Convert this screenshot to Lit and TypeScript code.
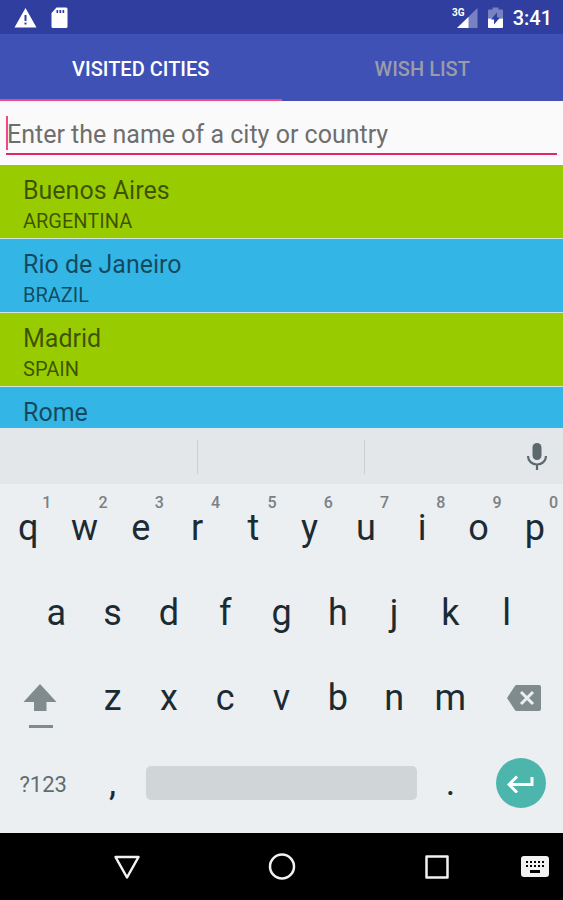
import { LitElement, html, css, svg, nothing } from "lit";
import { customElement, state } from "lit/decorators.js";
import { classMap } from "lit/directives/class-map.js";

interface City {
  name: string;
  country?: string;
}

const VISITED: City[] = [
  { name: "Buenos Aires", country: "ARGENTINA" },
  { name: "Rio de Janeiro", country: "BRAZIL" },
  { name: "Madrid", country: "SPAIN" },
  { name: "Rome" },
];

@customElement("status-bar")
class StatusBar extends LitElement {
  static styles = css`
    :host {
      display: flex;
      align-items: center;
      justify-content: space-between;
      height: 34px;
      padding: 2px 11px 0 14px;
      box-sizing: border-box;
      background: #303f9f;
      color: #fff;
    }
    .group {
      display: flex;
      align-items: center;
      gap: 12px;
    }
    .right {
      gap: 10px;
    }
    .time {
      font-size: 20px;
      line-height: 24px;
      font-weight: 500;
    }
    svg {
      display: block;
    }
    .net {
      font: 700 10px Roboto, sans-serif;
    }
  `;
  render() {
    return html`
      <div class="group">
        <svg width="23" height="22" viewBox="0 0 23 22" fill="#fff" aria-label="Warning">
          <path fill-rule="evenodd" d="M11.5 1 22.5 20.500H.5zM10.500 8v6h2v-6zm0 7.500v2h2v-2z" />
        </svg>
        <svg width="20" height="22" viewBox="0 0 20 22" fill="#fff" aria-label="SD card">
          <path fill-rule="evenodd" d="M7.500 .5H17A1.500 1.500 0 0 1 18.500 2v17.500A1.500 1.500 0 0 1 17 21H4a1.500 1.500 0 0 1-1.500-1.500V6zM7.500 3v3h1.700V3zm3 0v3h1.700V3zm3 0v3h1.700V3z" />
        </svg>
      </div>
      <div class="group right">
        <svg width="26" height="22" viewBox="0 0 26 22" fill="#fff" aria-label="3G signal">
          <path d="M25.500 1v20H5z" opacity="0.35" />
          <path d="M16.500 10V21H5z" />
          <text class="net" x="0" y="9">3G</text>
        </svg>
        <svg width="15" height="22" viewBox="0 0 15 22" fill="#fff" aria-label="Battery charging">
          <path d="M4.500 .5h6v2H14a1 1 0 0 1 1 1v8H0v-8a1 1 0 0 1 1-1h3.500z" opacity="0.35" />
          <path d="M0 11.500h15V20a1 1 0 0 1-1 1H1a1 1 0 0 1-1-1z" />
          <path d="M9 5.500v5h3l-6 7v-5H3z" fill="#303f9f" />
        </svg>
        <span class="time">3:41</span>
      </div>
    `;
  }
}

@customElement("city-list")
class CityList extends LitElement {
  static styles = css`
    :host {
      display: block;
      overflow: hidden;
      background: #fafafa;
    }
    ul {
      list-style: none;
      margin: 0;
      padding: 0;
    }
    li {
      min-height: 60px;
      padding: 11px 23px 2px;
      border-bottom: 1px solid #d4e6d8;
      background: #99cc00;
      color: rgba(0, 0, 0, 0.6);
      line-height: 30px;
    }
    li:nth-child(even) {
      background: #33b5e5;
    }
    .name {
      font-size: 25px;
    }
    .country {
      font-size: 20px;
    }
  `;
  render() {
    return html`<ul>
      ${VISITED.map(
        (c) => html`<li>
          <div class="name">${c.name}</div>
          ${c.country ? html`<div class="country">${c.country}</div>` : nothing}
        </li>`
      )}
    </ul>`;
  }
}

@customElement("soft-keyboard")
class SoftKeyboard extends LitElement {
  static styles = css`
    :host {
      display: block;
      background: #eceff1;
    }
    button {
      font-family: inherit;
      border: 0;
      margin: 0;
      padding: 0;
      background: none;
      color: #1b2b34;
    }
    svg {
      display: block;
    }
    .strip {
      display: grid;
      grid-template-columns: 198fr 167fr 198fr;
      align-items: center;
      height: 56px;
      padding-top: 2px;
      box-sizing: border-box;
      background: #e4e7e9;
    }
    .slot {
      height: 34px;
      border-right: 1px solid #cbcfd1;
    }
    .mic {
      justify-self: end;
      margin-right: 14px;
    }
    .keys {
      padding: 1px 0 8px;
    }
    .row {
      display: grid;
      grid-template-columns: repeat(20, minmax(0, 1fr));
      height: 85px;
    }
    .row.inset::before {
      content: "";
    }
    .key {
      grid-column: span 2;
      position: relative;
      font-size: 36px;
      line-height: 42px;
    }
    .hint {
      position: absolute;
      top: 8px;
      right: 5px;
      font-size: 16px;
      line-height: 20px;
      font-weight: 500;
      color: #7b8084;
    }
    .wide {
      grid-column: span 3;
      display: flex;
      align-items: center;
      justify-content: center;
    }
    .shift {
      padding-right: 4px;
    }
    .delete {
      padding-left: 6px;
    }
    .symbols {
      padding: 4px 0 0 2px;
      font-size: 22px;
      color: #5f6d73;
    }
    .space {
      grid-column: span 10;
      align-self: center;
      height: 34px;
      margin: 0 5px;
      border-radius: 5px;
      background: #d0d5d8;
    }
    .enter {
      width: 50px;
      height: 50px;
      border-radius: 50%;
      background: #4db6ac;
      display: flex;
      align-items: center;
      justify-content: center;
    }
  `;

  private key(k: string, hint?: string) {
    return html`<button class="key">
      ${k}${hint ? html`<span class="hint">${hint}</span>` : nothing}
    </button>`;
  }

  render() {
    return html`
      <div class="strip">
        <span class="slot"></span>
        <span class="slot"></span>
        <button class="mic" aria-label="Voice input">
          <svg width="24" height="30" viewBox="0 0 24 30">
            <rect x="7.500" y="1" width="9" height="17" rx="4.500" fill="#5b686d" />
            <path d="M3 14c0 5 4 8.500 9 8.500s9-3.500 9-8.500M12 22.500v5.500" fill="none" stroke="#5b686d" stroke-width="2.200" />
          </svg>
        </button>
      </div>
      <div class="keys">
        <div class="row">
          ${[..."qwertyuiop"].map((k, i) => this.key(k, String((i + 1) % 10)))}
        </div>
        <div class="row inset">${[..."asdfghjkl"].map((k) => this.key(k))}</div>
        <div class="row">
          <button class="wide shift" aria-label="Shift">
            <svg width="34" height="64" viewBox="0 0 34 64" fill="#7f8b8c">
              <path d="M17 18 33.500 36H23.500V45H11V36H.5z" />
              <path d="M6 59h24v3H6z" />
            </svg>
          </button>
          ${[..."zxcvbnm"].map((k) => this.key(k))}
          <button class="wide delete" aria-label="Backspace">
            <svg width="34" height="28" viewBox="0 0 34 28">
              <path d="M9.500 1H32a2 2 0 0 1 2 2v22a2 2 0 0 1-2 2H9.500a2 2 0 0 1-1.600-.9L0 14l7.900-12.100A2 2 0 0 1 9.500 1z" fill="#7f8b8c" />
              <path d="m14 8 12 12M26 8 14 20" stroke="#eceff1" stroke-width="3" />
            </svg>
          </button>
        </div>
        <div class="row">
          <button class="wide symbols">?123</button>
          ${this.key(",")}
          <button class="space" aria-label="Space"></button>
          ${this.key(".")}
          <button class="wide" aria-label="Enter">
            <span class="enter">
              <svg width="28" height="20" viewBox="0 0 28 20" fill="none" stroke="#fff" stroke-width="3">
                <path d="M25 4v7.500H2.500M10 3.500l-8 8 8 8" />
              </svg>
            </span>
          </button>
        </div>
      </div>
    `;
  }
}

@customElement("nav-bar")
class NavBar extends LitElement {
  static styles = css`
    :host {
      display: grid;
      grid-template-columns: 49fr 155fr 155fr 155fr 49fr;
      align-items: center;
      justify-items: center;
      height: 67px;
      background: #000;
    }
    button {
      border: 0;
      padding: 0;
      background: none;
    }
    .back {
      grid-column: 2;
    }
    .ime {
      justify-self: end;
      margin-right: 14px;
    }
    svg {
      display: block;
    }
  `;
  render() {
    const dots = [0, 1, 2, 3, 4].flatMap((c) =>
      [0, 1].map(
        (r) => svg`<rect x=${5 + c * 4} y=${5 + r * 4} width="2" height="2" fill="#000" />`
      )
    );
    return html`
      <button class="back" aria-label="Back">
        <svg width="28" height="26" viewBox="0 0 28 26" fill="none" stroke="#f2f2f2" stroke-width="2.500" stroke-linejoin="round">
          <path d="M2.500 3h23L14 23.500z" />
        </svg>
      </button>
      <button aria-label="Home">
        <svg width="28" height="28" viewBox="0 0 28 28" fill="none" stroke="#f2f2f2" stroke-width="2.500">
          <circle cx="14" cy="13.500" r="12" />
        </svg>
      </button>
      <button aria-label="Recent apps">
        <svg width="26" height="26" viewBox="0 0 26 26" fill="none" stroke="#f2f2f2" stroke-width="2.500" stroke-linejoin="round">
          <rect x="2.500" y="2.500" width="21" height="21" />
        </svg>
      </button>
      <button class="ime" aria-label="Choose keyboard">
        <svg width="28" height="21" viewBox="0 0 28 21">
          <rect width="28" height="21" rx="3" fill="#f2f2f2" />
          ${dots}
          <rect x="9" y="14" width="10" height="3" fill="#000" />
        </svg>
      </button>
    `;
  }
}

@customElement("app-root")
class AppRoot extends LitElement {
  @state() private tab = 0;

  static styles = css`
    :host {
      display: flex;
      flex-direction: column;
      height: 100vh;
      font-family: Roboto, "Liberation Sans", sans-serif;
      background: #fafafa;
    }
    status-bar,
    soft-keyboard,
    nav-bar {
      flex: none;
    }
    .tabs {
      display: grid;
      grid-template-columns: 1fr 1fr;
      flex: none;
      background: #3f51b5;
    }
    .tab {
      height: 67px;
      border: 0;
      border-bottom: 2px solid transparent;
      padding: 4px 0 0;
      background: none;
      font: 500 20px/24px Roboto, "Liberation Sans", sans-serif;
      color: #9b9ca8;
    }
    .tab.active {
      color: #fff;
      border-bottom-color: #f0488a;
    }
    .search {
      position: relative;
      display: block;
      flex: none;
      padding: 12px 6px 10px;
    }
    .search::before {
      content: "";
      position: absolute;
      left: 6px;
      top: 15px;
      width: 2px;
      height: 34px;
      background: #f0488a;
    }
    input {
      display: block;
      box-sizing: border-box;
      width: 100%;
      height: 42px;
      border: 0;
      border-bottom: 2px solid #e0246e;
      border-radius: 0;
      outline: none;
      padding: 2px 1px 0;
      background: none;
      font: 25px/30px Roboto, "Liberation Sans", sans-serif;
      color: #222;
      caret-color: #f0488a;
    }
    input::placeholder {
      color: #6e6e6e;
      opacity: 1;
    }
    city-list {
      flex: 1;
      min-height: 0;
    }
  `;

  render() {
    return html`
      <status-bar></status-bar>
      <div class="tabs" role="tablist">
        ${["VISITED CITIES", "WISH LIST"].map(
          (label, i) => html`<button
            role="tab"
            aria-selected=${this.tab === i}
            class=${classMap({ tab: true, active: this.tab === i })}
            @click=${() => (this.tab = i)}
          >
            ${label}
          </button>`
        )}
      </div>
      <label class="search">
        <input
          type="text"
          aria-label="City or country"
          placeholder="Enter the name of a city or country"
        />
      </label>
      <city-list></city-list>
      <soft-keyboard></soft-keyboard>
      <nav-bar></nav-bar>
    `;
  }
}
